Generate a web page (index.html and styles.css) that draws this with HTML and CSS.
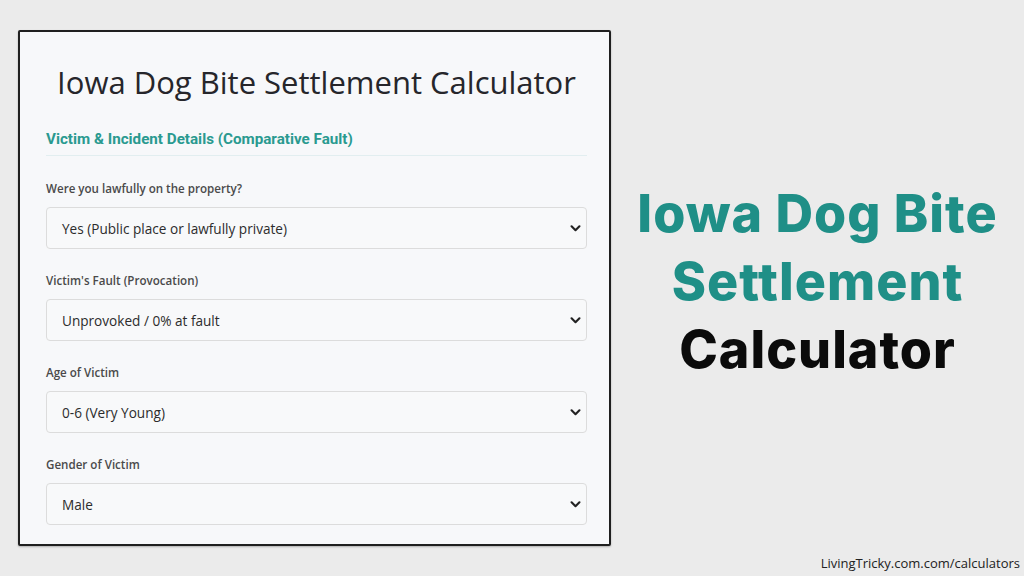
FILE: index.html
```html
<!DOCTYPE html>
<html>
<head>
<meta charset="utf-8">
<link rel="stylesheet" href="styles.css">
</head>
<body>
<div class="page">
  <div class="main">
    <div class="card">
      <h1 class="title">Iowa Dog Bite Settlement Calculator</h1>
      <h2 class="section">Victim &amp; Incident Details (Comparative Fault)</h2>
      <div class="field">
        <div class="label">Were you lawfully on the property?</div>
        <div class="select"><span>Yes (Public place or lawfully private)</span><svg class="chev" viewBox="0 0 12 8" width="11" height="7"><path d="M1.5 1.5 L6 6 L10.5 1.5" fill="none" stroke="#222" stroke-width="2.4" stroke-linecap="round" stroke-linejoin="round"/></svg></div>
      </div>
      <div class="field">
        <div class="label">Victim's Fault (Provocation)</div>
        <div class="select"><span>Unprovoked / 0% at fault</span><svg class="chev" viewBox="0 0 12 8" width="11" height="7"><path d="M1.5 1.5 L6 6 L10.5 1.5" fill="none" stroke="#222" stroke-width="2.4" stroke-linecap="round" stroke-linejoin="round"/></svg></div>
      </div>
      <div class="field">
        <div class="label">Age of Victim</div>
        <div class="select"><span>0-6 (Very Young)</span><svg class="chev" viewBox="0 0 12 8" width="11" height="7"><path d="M1.5 1.5 L6 6 L10.5 1.5" fill="none" stroke="#222" stroke-width="2.4" stroke-linecap="round" stroke-linejoin="round"/></svg></div>
      </div>
      <div class="field">
        <div class="label">Gender of Victim</div>
        <div class="select"><span>Male</span><svg class="chev" viewBox="0 0 12 8" width="11" height="7"><path d="M1.5 1.5 L6 6 L10.5 1.5" fill="none" stroke="#222" stroke-width="2.4" stroke-linecap="round" stroke-linejoin="round"/></svg></div>
      </div>
    </div>
    <div class="hero">
      <div class="hero-line teal">Iowa Dog Bite</div>
      <div class="hero-line teal">Settlement</div>
      <div class="hero-line black">Calculator</div>
    </div>
  </div>
  <div class="footer">LivingTricky.com.com/calculators</div>
</div>
</body>
</html>
```
FILE: styles.css
```css
html, body {
  margin: 0;
  padding: 0;
}
body {
  background: #ebebeb;
  font-family: "Open Sans", "Noto Sans", sans-serif;
}
.page {
  width: 1024px;
  height: 576px;
  display: flex;
  flex-direction: column;
  overflow: hidden;
}
.main {
  display: flex;
  padding: 30px 0 0 18px;
}
.card {
  width: 593px;
  height: 516px;
  box-sizing: border-box;
  border: 2px solid #1f1f1f;
  border-radius: 2px;
  background: #f7f8fa;
  padding: 30px 22px 0 26px;
  box-shadow: 0 1px 2px rgba(0,0,0,0.25);
}
.title {
  margin: 0;
  text-align: center;
  font-family: "Open Sans", sans-serif;
  font-weight: 500;
  font-size: 31px;
  line-height: 40px;
  color: #26262b;
}
.section {
  margin: 27px 0 0 0;
  font-family: "Roboto", sans-serif;
  font-weight: 700;
  font-size: 15.2px;
  line-height: 20px;
  color: #2a9a90;
  padding-bottom: 6px;
  border-bottom: 1px solid #e2eef0;
}
.field {
  margin-top: 24px;
}
.field + .field {
  margin-top: 23px;
}
.label {
  font-size: 11.6px;
  font-weight: 600;
  line-height: 18px;
  color: #4a4a4a;
  margin-bottom: 9px;
}
.select {
  height: 42px;
  box-sizing: border-box;
  border: 1px solid #dcdcdc;
  border-radius: 4px;
  background: #f8f9fa;
  display: flex;
  align-items: center;
  justify-content: space-between;
  padding: 0 5px 0 15px;
  font-size: 13.6px;
  color: #2c2c2c;
}
.chev {
  display: block;
}
.hero {
  flex: 1;
  display: flex;
  flex-direction: column;
  align-items: center;
  padding-top: 150px;
}
.hero-line {
  font-family: "Inter", sans-serif;
  font-weight: 800;
  font-size: 52px;
  line-height: 68px;
  letter-spacing: 1px;
}
.teal { color: #1f8f87; }
.black { color: #0b0b0b; }
.footer {
  margin-top: auto;
  text-align: right;
  padding: 0 4px 4px 0;
  font-family: "Open Sans", sans-serif;
  font-size: 13px;
  line-height: 18px;
  color: #222;
}
```
